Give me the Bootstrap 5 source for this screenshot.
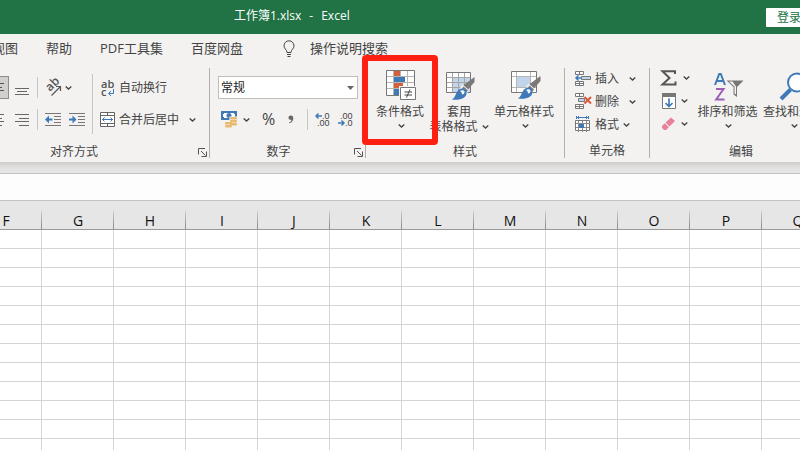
<!DOCTYPE html>
<html lang="zh-CN">
<head>
<meta charset="utf-8">
<meta name="viewport" content="width=device-width, initial-scale=1">
<title>工作簿1.xlsx - Excel</title>
<link href="https://cdn.jsdelivr.net/npm/bootstrap@5.3.0/dist/css/bootstrap.min.css" rel="stylesheet">
<style>
  :root { --ink:#444; --blue:#3f7ab8; }
  body { font-family:"Open Sans","Noto Sans CJK SC",sans-serif; font-size:12px; line-height:15px; color:var(--ink); background:#fff; }
  svg { display:block; flex:none; overflow:visible; }
  .app-title { height:34px; background:#217346; color:#fff; padding-left:234px; line-height:18px; }
  .doc-name { gap:8px; padding-bottom:2px; }
  .sign-in { background:#fff; color:#217346; border:0; border-radius:1px; height:19px; padding:0 11px; margin-right:-12px; line-height:19px; }
  .app-tabs { height:30px; gap:28px; font-size:13px; line-height:18px; margin-left:-8px; padding-bottom:2px; }
  .app-tabs a { color:var(--ink); text-decoration:none; white-space:nowrap; }
  .tabs-wrap, .ribbon { background:#f3f2f1; }
  .search-tip { gap:15px; margin-left:12px; }
  .ribbon { padding:4px 0; overflow-x:clip; z-index:1; }
  .rgroup { border-right:1px solid #b1b0ae; height:90px; flex:none; }
  .rbody { height:75px; }
  .rlabel { display:grid; grid-template-columns:1fr auto 1fr; height:15px; line-height:17px; }
  .g-align { width:271px; margin-left:-61px; }
  .g-number { width:156px; }
  .g-number .rlabel { grid-template-columns:57fr auto 75fr; }
  .g-style { width:199px; }
  .g-cells { width:85px; }
  .g-edit { width:183px; }
  .tool { border:0; background:none; padding:0; color:inherit; display:flex; align-items:center; white-space:nowrap; flex:none; line-height:15px; }
  .tool:hover { background:#e1dfdd; }
  .corner { margin:5px 2px 0 auto; align-self:start; }
  .rows { gap:9px; padding-top:8px; }
  .rline { display:flex; align-items:center; height:23px; }
  .al { width:24px; height:23px; justify-content:center; }
  .al.pressed { background:#d2d0ce; border:1px solid #8f8d8b; }
  .cut { width:1px; height:21px; background:#c8c6c4; flex:none; }
  .cut.tall { height:60px; margin-top:6px; }
  .num-format { appearance:none; width:140px; height:23px; border:1px solid #c0bebc; border-radius:0; background:#fff; font-size:12px; line-height:15px; color:#222; padding:0 2px; }
  .num-arrow { right:4px; top:10px; pointer-events:none; }
  .pct { font-size:16px; }
  .big { flex-direction:column; }
  .big .pic { height:36px; display:flex; align-items:center; justify-content:center; padding-left:2px; }
  .big .under { height:15px; display:flex; align-items:center; justify-content:center; gap:4px; }
  .big .drop { height:13px; padding-left:2px; }
  .cell-tools { padding-left:10px; margin-top:-1px; }
  .cell-tools .tool { height:23px; }
  .hot { left:-4px; top:-13px; width:76px; height:90px; border:6px solid #fe1f13; border-radius:4px; pointer-events:none; z-index:2; }
  .shade { height:11px; background:linear-gradient(#cfcdcb,#e3e3e3 60%,#e6e6e6); }
  .formula { height:28px; border:solid #c3c3c3; border-width:1px 0; border-radius:0; background:#fdfdfd; width:100%; display:block; padding:0 8px; }
  .sheet { border-collapse:separate; border-spacing:0; table-layout:fixed; width:864px; margin-left:-30px; color:#111; }
  .sheet th { height:29px; padding:12px 0 0; border-bottom:1px solid #999; font-weight:400; font-size:14px; line-height:16px; text-align:center; background:linear-gradient(#ccc,#888) right bottom/1px 18px no-repeat #e6e6e6; }
  .sheet td { height:19px; padding:0; border:solid #d4d4d4; border-width:0 1px 1px 0; }
</style>
<script src="https://cdn.jsdelivr.net/npm/bootstrap@5.3.0/dist/js/bootstrap.bundle.min.js"></script>
</head>
<body class="vh-100 overflow-hidden d-flex flex-column">

<svg width="0" height="0" class="position-absolute" aria-hidden="true">
  <symbol id="chev" viewBox="0 0 7 4"><path d="M.7.5 3.5 3.1 6.3.5" fill="none" stroke="#444" stroke-width="1.3"/></symbol>
  <symbol id="launch" viewBox="0 0 9 9"><path d="M.5 6.500V.500H7M3 3l4.500 4.500M8.500 3.500v5h-5" fill="none" stroke="#555"/></symbol>
  <symbol id="brush" viewBox="0 0 23 23"><path d="M22.500 0v5L16 12.500 11 8.500z" fill="#7b7977"/><path d="M10.500 7.500 17.500 13.500 14 17 8 11z" fill="#f3f2f1"/><path d="M11.500 9.500 16 13.500 14 15.500 10 11.500z" fill="#7b7977"/><path d="M0 22.500c3-2 3-4.500 5-7.500 2-3.500 6-4.500 8.500-2 2.500 3 .5 7-3 8.500-3 1.300-7 1.400-10.500 1z" fill="#3f7ab8"/><path d="M8 14c1.500-1.200 4-1 4.500.5s-.8 3-2.500 3c0-1.500-.5-2.500-2-3.500z" fill="#f3f7fb"/></symbol>
</svg>

<header class="app-title d-flex align-items-center flex-shrink-0 overflow-hidden">
  <div class="doc-name d-flex text-nowrap"><span>工作簿1.xlsx</span><span>-</span><span>Excel</span></div>
  <button class="sign-in ms-auto text-nowrap" type="button">登录</button>
</header>

<div class="tabs-wrap overflow-hidden flex-shrink-0">
  <nav class="app-tabs d-flex align-items-center">
    <a href="#">视图</a><a href="#">帮助</a><a href="#">PDF工具集</a><a href="#">百度网盘</a>
    <a href="#" class="search-tip d-flex align-items-center">
      <svg width="12" height="18" viewBox="0 0 12 18" fill="none" stroke="#444"><path d="M4 13.500C4 10.500 1 10 1 6.800a5 5 0 0 1 10 0C11 10 8 10.500 8 13.500zM4 15.500h4M4.500 17.500h3"/></svg>
      操作说明搜索</a>
  </nav>
</div>

<div class="ribbon d-flex flex-nowrap flex-shrink-0 position-relative">

  <section class="rgroup g-align">
    <div class="rbody d-flex">
      <div class="rows d-flex flex-column" style="padding-left:21px">
        <div class="rline">
          <button class="tool al" type="button" aria-label="顶端对齐"><svg width="14" height="15" stroke="#666"><path d="M0 2.500h14M2 5.500h10M0 9.500h14"/></svg></button>
          <button class="tool al pressed" type="button" style="margin:0 1px" aria-label="垂直居中"><svg width="14" height="15" stroke="#555"><path d="M0 3.500h14M2 7.500h10M0 10.500h14"/></svg></button>
          <button class="tool al" type="button" aria-label="底端对齐"><svg width="14" height="15" stroke="#666"><path d="M0 8.500h14M2 11.500h10M0 14.500h14"/></svg></button>
          <span class="cut" style="margin-left:3px"></span>
        </div>
        <div class="rline">
          <button class="tool al" type="button" aria-label="左对齐"><svg width="14" height="12" stroke="#666"><path d="M0 .5h14M0 4.500h10M0 7.500h14M0 11.500h10"/></svg></button>
          <button class="tool al" type="button" style="margin:0 1px" aria-label="居中"><svg width="14" height="12" stroke="#666"><path d="M0 .5h14M2 4.500h10M0 7.500h14M2 11.500h10"/></svg></button>
          <button class="tool al" type="button" aria-label="右对齐"><svg width="14" height="12" stroke="#666"><path d="M0 .5h14M4 4.500h10M0 7.500h14M4 11.500h10"/></svg></button>
          <span class="cut" style="margin-left:3px"></span>
        </div>
      </div>
      <div class="rows d-flex flex-column" style="width:54px;padding-left:7px">
        <div class="rline">
          <button class="tool gap-1" type="button" aria-label="方向"><svg width="16" height="17" viewBox="0 0 16 17"><text x="5" y="13" transform="rotate(-45 5 13)" font-size="12" font-weight="600" fill="#555">ab</text><path d="M6.500 16.500 15 8M11 7.500h4.500V12" fill="none" stroke="#555" stroke-width="1.200"/></svg><svg width="7" height="4"><use href="#chev"/></svg></button>
        </div>
        <div class="rline gap-2">
          <button class="tool" type="button" aria-label="减少缩进"><svg width="16" height="13" viewBox="0 0 16 13"><path d="M0 .5h16M9 3.500h7M9 6.500h7M9 9.500h7M0 12.500h16" stroke="#777"/><path d="M0 6.500 4 2.500V5.500h3.500v2H4v3z" fill="#3f7ab8"/></svg></button>
          <button class="tool" type="button" aria-label="增加缩进"><svg width="16" height="13" viewBox="0 0 16 13"><path d="M0 .5h16M9 3.500h7M9 6.500h7M9 9.500h7M0 12.500h16" stroke="#777"/><path d="M7.500 6.500 3.500 2.500V5.500H0v2h3.500v3z" fill="#3f7ab8"/></svg></button>
        </div>
      </div>
      <span class="cut tall"></span>
      <div class="rows d-flex flex-column" style="padding-left:7px">
        <div class="rline">
          <button class="tool" type="button"><svg width="16" height="18" viewBox="0 0 16 18" style="margin-right:3px"><text x="1" y="9" font-size="11" font-weight="600" fill="#555">ab</text><text x="1" y="17" font-size="11" font-weight="600" fill="#555">c</text><path d="M13.500 10v4.500H9M11 12l-2.500 2.500L11 17" fill="none" stroke="#3f7ab8"/></svg>自动换行</button>
        </div>
        <div class="rline">
          <button class="tool" type="button"><svg width="16" height="16" viewBox="0 0 16 16" style="margin-right:3px"><path d="M.5.500h14v14H.500z" fill="#fff" stroke="#666"/><path d="M1 3.500h13M1 11.500h13M7.500 1v2.500M7.500 12v2.500" stroke="#666"/><path d="M2 7.500h11M4.500 5.500l-2 2 2 2M10.500 5.500l2 2-2 2" fill="none" stroke="#3f7ab8"/></svg>合并后居中<svg width="7" height="4" style="margin-left:10px"><use href="#chev"/></svg></button>
        </div>
      </div>
    </div>
    <div class="rlabel"><span></span><span>对齐方式</span><button class="tool corner" type="button" aria-label="对齐设置"><svg width="9" height="9"><use href="#launch"/></svg></button></div>
  </section>

  <section class="rgroup g-number">
    <div class="rbody rows d-flex flex-column ps-2">
      <div class="rline position-relative" style="width:140px">
        <select class="num-format" aria-label="数字格式"><option>常规</option><option>数值</option></select>
        <svg class="num-arrow position-absolute" width="7" height="4"><path d="M0 0h7L3.500 4z" fill="#666"/></svg>
      </div>
      <div class="rline" style="padding-left:3px">
        <button class="tool" type="button" aria-label="会计格式"><svg width="17" height="17" viewBox="0 0 17 17"><path d="M0 0h16v9H0z" fill="#3f7ab8"/><path d="M2 2h12v5H2z" fill="#fff"/><circle cx="8" cy="4.500" r="2.500" fill="#3f7ab8"/><path d="M1 1h2v2H1zM13 1h2v2h-2zM1 6h2v2H1z" fill="#3f7ab8"/><path d="M8.500 5.500H17V15H8zM4 10.500h8V17H4z" fill="#f3f2f1"/><g fill="#e9b96e"><rect x="9" y="6" width="7" height="2.500" rx="1"/><rect x="9" y="9" width="7" height="2.500" rx="1"/><rect x="9" y="12" width="7" height="2.500" rx="1"/><rect x="4" y="11" width="7" height="2.500" rx="1"/><rect x="4" y="14" width="7" height="2.500" rx="1"/></g></svg><svg width="7" height="4" style="margin-left:5px"><use href="#chev"/></svg></button>
        <button class="tool pct" style="margin-left:12px" type="button">%</button>
        <button class="tool" style="margin-left:13px" type="button" aria-label="千位分隔"><svg width="6" height="9" viewBox="0 0 6 9"><path d="M1 7.500C3 7 3.500 6 3.300 4.800 1.500 5 .5 4 .5 2.700.5 1.300 1.500.5 2.800.5 4.500.5 5.300 1.800 5.300 3.300 5.300 6 3.500 7.800 1.300 8.300z" fill="#666"/></svg></button>
        <span class="cut" style="margin-left:13px"></span>
        <button class="tool" style="margin-left:7px" type="button" aria-label="增加小数位"><svg width="15" height="16" viewBox="0 0 15 16"><path d="M1 4h6M3.500 1.500 1 4l2.500 2.500" fill="none" stroke="#3f7ab8" stroke-width="1.500"/><text x="7" y="7" font-size="9" font-family="Liberation Sans" fill="#444">.0</text><text x="2" y="14" font-size="9" font-family="Liberation Sans" fill="#444">.00</text></svg></button>
        <button class="tool" style="margin-left:8px" type="button" aria-label="减少小数位"><svg width="16" height="16" viewBox="0 0 16 16"><text x="2" y="7" font-size="9" font-family="Liberation Sans" fill="#444">.00</text><text x="7" y="14" font-size="9" font-family="Liberation Sans" fill="#444">.0</text><path d="M0 11h6M3.500 8.500 6 11l-2.500 2.500" fill="none" stroke="#3f7ab8" stroke-width="1.500"/></svg></button>
      </div>
    </div>
    <div class="rlabel"><span></span><span>数字</span><button class="tool corner" type="button" aria-label="数字设置"><svg width="9" height="9"><use href="#launch"/></svg></button></div>
  </section>

  <section class="rgroup g-style position-relative">
    <div class="rbody d-flex align-items-start">
      <button class="tool big" style="width:68px" type="button">
        <span class="pic"><svg width="31" height="32" viewBox="0 0 31 32"><path d="M.5.500h28v25H.500z" fill="#fff" stroke="#777"/><path d="M7.500 1v24M14.500 1v24M21.500 1v24M1 6.500h27M1 12.500h27M1 18.500h27" stroke="#b5b5b5"/><path d="M8 1h6v5H8zM8 13h9v5H8z" fill="#d35f3d"/><path d="M8 7h11v5H8zM8 19h5v6H8z" fill="#3f7ab8"/><path d="M13 16h18v16H13z" fill="#f3f2f1"/><path d="M14.500 17.500h15v12h-15z" fill="#fff" stroke="#777"/><path d="M18.500 22h7.500M18.500 25h7.500M24 19.500l-3.500 8" stroke="#444"/></svg></span>
        <span class="under">条件格式</span><span class="under drop"><svg width="7" height="4"><use href="#chev"/></svg></span>
      </button>
      <button class="tool big" style="width:50px" type="button">
        <span class="pic"><svg width="29" height="30" viewBox="0 0 29 30"><path d="M.5 1.500h24v20H.500z" fill="#fff" stroke="#777"/><path d="M7 7h17v14H7z" fill="#c1d4ea"/><path d="M6.500 2v19M12.500 2v19M18.500 2v19M1 6.500h23M1 11.500h23M1 16.500h23" stroke="#a5a5a5"/><use href="#brush" x="6" y="6" width="23" height="23"/></svg></span>
        <span class="under">套用</span><span class="under">表格格式<svg width="7" height="4"><use href="#chev"/></svg></span>
      </button>
      <button class="tool big" style="width:80px" type="button">
        <span class="pic"><svg width="29" height="30" viewBox="0 0 29 30"><path d="M.5.500h25v21H.500z" fill="#fff" stroke="#777"/><path d="M5.500 1v20M19.500 1v20M1 5.500h24M1 16.500h24" stroke="#b5b5b5"/><path d="M6 6h13v10H6z" fill="#c1d4ea"/><use href="#brush" x="7" y="5" width="23" height="23"/></svg></span>
        <span class="under">单元格样式</span><span class="under drop"><svg width="7" height="4"><use href="#chev"/></svg></span>
      </button>
    </div>
    <div class="rlabel"><span></span><span>样式</span></div>
    <div class="hot position-absolute"></div>
  </section>

  <section class="rgroup g-cells">
    <div class="rbody">
     <div class="cell-tools d-flex flex-column">
      <button class="tool" type="button"><svg width="17" height="17" viewBox="0 0 17 17" style="margin-right:3px"><path d="M.5 1.500h8v3h-8zM4.500 1.500v3M.5 11.500h8v4h-8zM4.500 11.500v4M.5 13.500h8M6.500 6.500h9v3h-9z" fill="#fff" stroke="#777"/><path d="M7 7h8v2H7z" fill="#c1d4ea"/><path d="M7 8H1M3.500 5.500 1 8l2.500 2.500" fill="none" stroke="#3f7ab8" stroke-width="1.500"/></svg>插入<svg width="7" height="4" style="margin-left:10px"><use href="#chev"/></svg></button>
      <button class="tool" type="button"><svg width="17" height="17" viewBox="0 0 17 17" style="margin-right:3px"><path d="M.5.500h8v3h-8zM4.500.500v3M.5 11.500h8v4h-8zM4.500 11.500v4M.5 13.500h8M3.500 5.500h6v3h-6z" fill="#fff" stroke="#777"/><path d="M4 6h5v2H4z" fill="#c1d4ea"/><path d="M9.500 4 16 10.500M16 4 9.500 10.500" stroke="#d9593a" stroke-width="2"/></svg>删除<svg width="7" height="4" style="margin-left:10px"><use href="#chev"/></svg></button>
      <button class="tool" type="button"><svg width="17" height="17" viewBox="0 0 17 17" style="margin-right:3px"><path d="M.5 4.500h14v10H.500z" fill="#fff" stroke="#777"/><path d="M3.500 5v11M7.500 5v11M11.500 5v11M1 7.500h13M1 11.500h13" stroke="#888"/><path d="M4 8h5v4H4z" fill="#3f7ab8"/><path d="M1.500 0v3M13.500 0v3M2 1.500h11M4 0 2.500 1.500 4 3M11 0l1.500 1.500L11 3" fill="none" stroke="#3f7ab8"/></svg>格式<svg width="7" height="4" style="margin-left:4px"><use href="#chev"/></svg></button>
     </div>
    </div>
    <div class="rlabel"><span></span><span>单元格</span></div>
  </section>

  <section class="rgroup g-edit">
    <div class="rbody d-flex align-items-start">
      <div class="d-flex flex-column" style="padding-left:11px;width:45px">
        <button class="tool" style="height:20px" type="button" aria-label="自动求和"><svg width="16" height="16" viewBox="0 0 16 16"><path d="M14 4V1.200H1.500L8.500 8l-7 6.500H14.500V11.500" fill="none" stroke="#555" stroke-width="2"/></svg><svg width="7" height="4" style="margin-left:6px"><use href="#chev"/></svg></button>
        <button class="tool" style="height:26px" type="button" aria-label="填充"><svg width="16" height="16" viewBox="0 0 16 16"><path d="M1.500.5h13v15h-13z" fill="#fff" stroke="#777"/><path d="M1 0h14v4H1z" fill="#777"/><path d="M8 5.500v8M4.500 10 8 13.500 11.500 10" fill="none" stroke="#3f7ab8" stroke-width="1.700"/></svg><svg width="7" height="4" style="margin-left:4px"><use href="#chev"/></svg></button>
        <button class="tool" style="height:20px" type="button" aria-label="清除"><svg width="16" height="14" viewBox="0 0 16 14"><path d="M10 .5 14 4 8.500 9.500 4.500 5.500z" fill="#e8829a"/><path d="M3.800 6.200 7.800 10.200 5 13H3L1 11V9z" fill="#e8829a"/></svg><svg width="7" height="4" style="margin-left:4px"><use href="#chev"/></svg></button>
      </div>
      <button class="tool big" style="width:65px" type="button">
        <span class="pic"><svg width="30" height="31" viewBox="0 0 30 31"><path d="M1 14 5.200 3h1.600L11 14M2.800 10h6.400" fill="none" stroke="#3f7ab8" stroke-width="2"/><path d="M2 18h7.500L2.200 28.500H10.500" fill="none" stroke="#9a5fb4" stroke-width="2"/><path d="M12.500 9.500h17L23 16v10l-3.500-2.500V16z" fill="#777"/><path d="M15 10.500h3.500l3.500 5v8l-1.500-1V15.500z" fill="#f3f2f1"/></svg></span>
        <span class="under">排序和筛选</span><span class="under drop"><svg width="7" height="4"><use href="#chev"/></svg></span>
      </button>
      <button class="tool big" style="width:66px" type="button">
        <span class="pic"><svg width="29" height="29" viewBox="0 0 29 29"><path d="M10.500 17.500 1 27" stroke="#3f7ab8" stroke-width="4"/><circle cx="17" cy="10.500" r="9" fill="#fff" stroke="#3f7ab8" stroke-width="2"/></svg></span>
        <span class="under">查找和选择</span><span class="under drop"><svg width="7" height="4"><use href="#chev"/></svg></span>
      </button>
    </div>
    <div class="rlabel"><span></span><span>编辑</span></div>
  </section>
</div>

<div class="shade flex-shrink-0"></div>
<input class="formula flex-shrink-0" type="text" aria-label="编辑栏">

<main class="overflow-hidden flex-grow-1">
  <table class="sheet">
    <thead><tr><th>F</th><th>G</th><th>H</th><th>I</th><th>J</th><th>K</th><th>L</th><th>M</th><th>N</th><th>O</th><th>P</th><th>Q</th></tr></thead>
    <tbody id="cells"></tbody>
  </table>
</main>
<script>
  const body = document.getElementById('cells');
  for (let r = 0; r < 12; r++) {
    const row = body.insertRow();
    for (let c = 0; c < 12; c++) row.insertCell();
  }
</script>
</body>
</html>
